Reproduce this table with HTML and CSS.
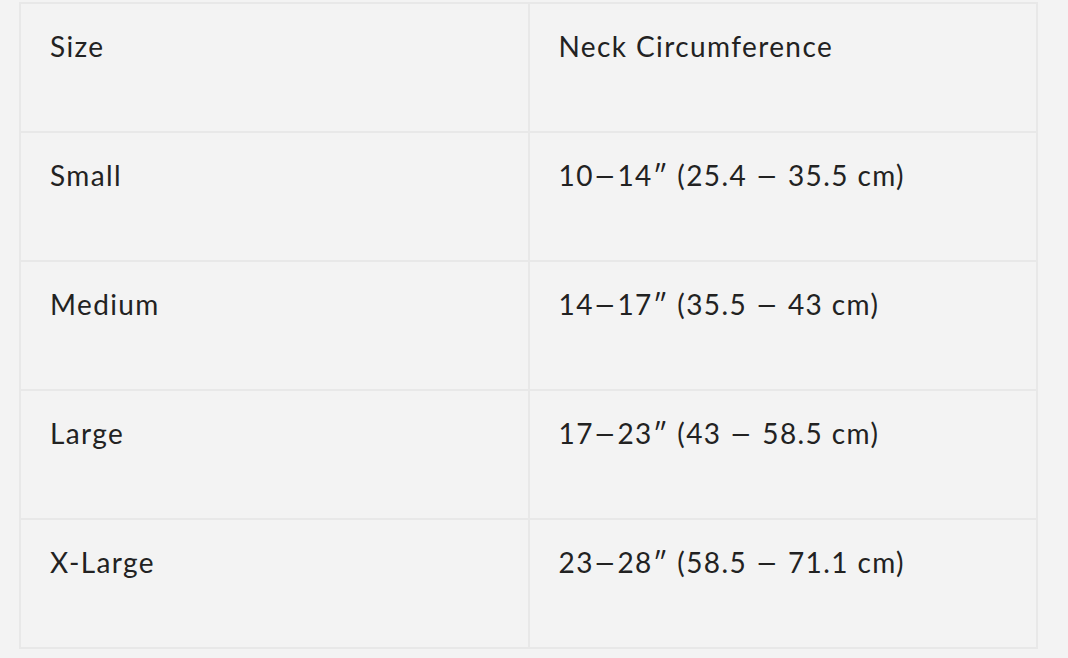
FILE: index.html
```html
<!DOCTYPE html>
<html>
<head>
<meta charset="utf-8">
<link rel="stylesheet" href="styles.css">
</head>
<body>
<table class="size-table">
  <tr><td>Size</td><td>Neck Circumference</td></tr>
  <tr><td>Small</td><td>10<span class="dash">–</span>14″ (25.4 <span class="dash">–</span> 35.5 cm)</td></tr>
  <tr><td>Medium</td><td>14<span class="dash">–</span>17″ (35.5 <span class="dash">–</span> 43 cm)</td></tr>
  <tr><td>Large</td><td>17<span class="dash">–</span>23″ (43 <span class="dash">–</span> 58.5 cm)</td></tr>
  <tr><td>X-Large</td><td>23<span class="dash">–</span>28″ (58.5 <span class="dash">–</span> 71.1 cm)</td></tr>
</table>
</body>
</html>
```
FILE: styles.css
```css
html, body {
  margin: 0;
  background: #f3f3f3;
}
body {
  padding: 2px 0 0 19px;
  font-family: "Lato", "Liberation Sans", sans-serif;
  color: #222;
}
.size-table {
  width: 1019px;
  border-collapse: separate;
  border-spacing: 0;
  border: 1px solid #e8e8e8;
}
.size-table td {
  border: 1px solid #e8e8e8;
  box-sizing: border-box;
  height: 129px;
  padding: 24px 29px;
  vertical-align: top;
  font-size: 28px;
  line-height: 36px;
  letter-spacing: 0.05em;
  width: 50%;
}
.dash {
  display: inline-block;
  transform: scaleX(1.45);
  margin: 0 3px;
}
```
